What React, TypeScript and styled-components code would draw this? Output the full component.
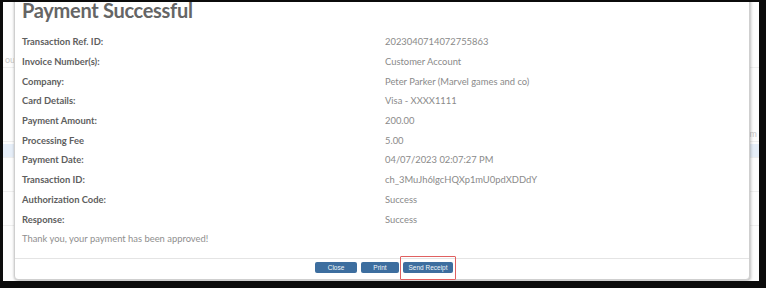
import React from 'react'
import styled, { createGlobalStyle } from 'styled-components'

const GlobalStyle = createGlobalStyle`
  html, body { margin: 0; padding: 0; background: #000; }
  body { font-family: "Lato", "Liberation Sans", sans-serif; }
`

type Detail = {
    label: string,
    value: string
}

const details: Detail[] = [
    { label: 'Transaction Ref. ID:', value: '2023040714072755863' },
    { label: 'Invoice Number(s):', value: 'Customer Account' },
    { label: 'Company:', value: 'Peter Parker (Marvel games and co)' },
    { label: 'Card Details:', value: 'Visa - XXXX1111' },
    { label: 'Payment Amount:', value: '200.00' },
    { label: 'Processing Fee', value: '5.00' },
    { label: 'Payment Date:', value: '04/07/2023 02:07:27 PM' },
    { label: 'Transaction ID:', value: 'ch_3MuJh6lgcHQXp1mU0pdXDDdY' },
    { label: 'Authorization Code:', value: 'Success' },
    { label: 'Response:', value: 'Success' },
]

const Frame = styled.div`
  position: relative;
  width: 756px;
  height: 279px;
  border-style: solid;
  border-color: #0b0b0b;
  border-width: 2px 7px 7px 3px;
  background: #fdfdfd;
  overflow: hidden;
`

// page that sits behind the dialog, mostly hidden
const BackPage = styled.div`
  display: flex;
  flex-direction: column;
  padding-top: 52px;
  color: #c8c8c8;
  font-size: 9px;
`

const BackRow = styled.div<{ $active?: boolean, $gap: number }>`
  height: 13px;
  display: flex;
  justify-content: space-between;
  padding: 0 2px;
  margin-bottom: ${p => p.$gap}px;
  background: ${p => (p.$active ? '#e6eef8' : 'transparent')};
  border-bottom: 1px solid #eeeeee;
`

const Dialog = styled.div`
  position: absolute;
  left: 11px;
  top: -14px;
  width: 734px;
  height: 290px;
  background: #fff;
  border: 1px solid #cfcfcf;
  border-radius: 0 0 4px 4px;
  box-shadow: 1px 1px 3px rgba(0, 0, 0, 0.25), -1px 0 2px rgba(0, 0, 0, 0.08);
  display: flex;
  flex-direction: column;
`

const Body = styled.div`
  flex: 1;
  padding: 0 0 0 7px;
`

const Title = styled.h1`
  margin: 0;
  height: 37px;
  padding-top: 6px;
  font-size: 20px;
  line-height: 30px;
  font-weight: 700;
  letter-spacing: -0.3px;
  color: #656565;
`

const Grid = styled.div`
  display: grid;
  grid-template-columns: 363px 1fr;
  grid-auto-rows: 19.7px;
  align-items: center;
  font-size: 9.4px;
`

const Label = styled.div`
  color: #5e5e5e;
  font-weight: 700;
`

const Value = styled.div`
  color: #8a8a8a;
`

const Note = styled.div`
  grid-column: 1 / span 2;
  color: #8f8f8f;
`

const Footer = styled.div`
  height: 17px;
  border-top: 1px solid #e4e4e4;
  display: flex;
  justify-content: center;
  align-items: flex-start;
  gap: 4px;
  padding-top: 3px;
  padding-left: 4px;
`

const Button = styled.button<{ $w: number }>`
  width: ${p => p.$w}px;
  height: 11px;
  padding: 0;
  border: none;
  border-radius: 2px;
  background: #3d6e9f;
  color: #f2f6fa;
  font-family: "Liberation Sans", sans-serif;
  font-size: 6.5px;
  line-height: 11px;
`

const Highlight = styled.div`
  padding: 5px 2px 6px 2px;
  margin: -6px -3px 0 -3px;
  border: 1.5px solid #e06060;
  border-radius: 1px;
  display: flex;
`

export default function App() {
    return (
        <>
            <GlobalStyle />
            <Frame>
                <BackPage>
                    <BackRow $gap={60}>ou<span /></BackRow>
                    <BackRow $gap={2}><span />Am</BackRow>
                    <BackRow $gap={20} $active />
                    <BackRow $gap={20} />
                    <BackRow $gap={20} />
                </BackPage>
                <Dialog>
                    <Body>
                        <Title>Payment Successful</Title>
                        <Grid>
                            {details.map(d => (
                                <React.Fragment key={d.label}>
                                    <Label>{d.label}</Label>
                                    <Value>{d.value}</Value>
                                </React.Fragment>
                            ))}
                            <Note>Thank you, your payment has been approved!</Note>
                        </Grid>
                    </Body>
                    <Footer>
                        <Button $w={42}>Close</Button>
                        <Button $w={38}>Print</Button>
                        <Highlight>
                            <Button $w={50}>Send Receipt</Button>
                        </Highlight>
                    </Footer>
                </Dialog>
            </Frame>
        </>
    )
}
